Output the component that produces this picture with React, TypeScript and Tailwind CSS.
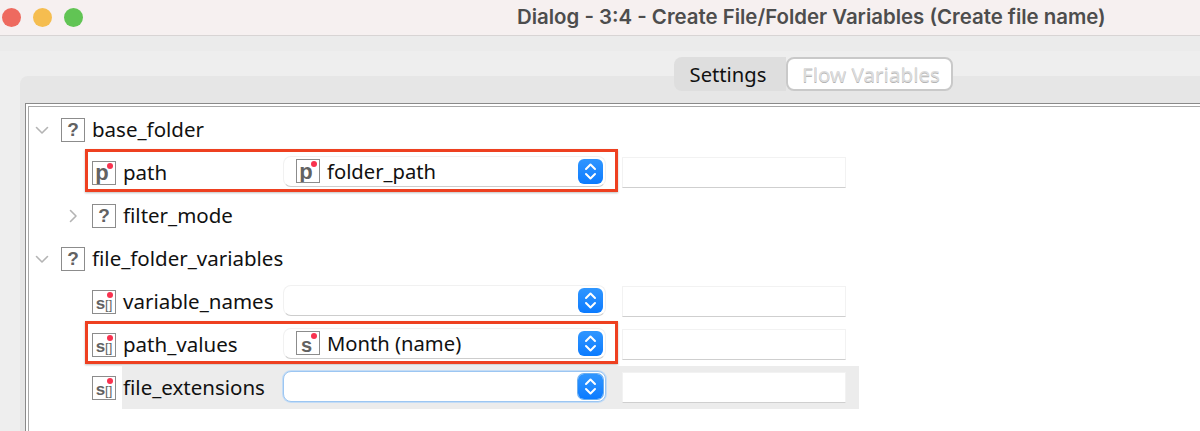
const labelFont = "font-['Noto_Sans','Open_Sans',sans-serif]"

function Chevron({ open }: { open: boolean }) {
  return (
    <svg width="14" height="14" viewBox="0 0 14 14" fill="none" stroke="#b4b4b4" strokeWidth="1.6" strokeLinecap="round" strokeLinejoin="round">
      {open ? <polyline points="1.5,4.5 7,10 12.5,4.5" /> : <polyline points="4.5,1.5 10,7 4.5,12.5" />}
    </svg>
  )
}

function Stepper({ focused }: { focused?: boolean }) {
  return (
    <span className={`flex h-[25px] w-[25px] items-center justify-center rounded-[6px] bg-gradient-to-b from-[#2f96ff] to-[#0a7bff] ${focused ? "shadow-[0_0_0_1px_#6aaef0]" : ""}`}>
      <svg width="15" height="19" viewBox="0 0 15 19" fill="none" stroke="white" strokeWidth="2" strokeLinecap="round" strokeLinejoin="round">
        <polyline points="3,7 7.5,2.5 12,7" />
        <polyline points="3,12 7.5,16.5 12,12" />
      </svg>
    </span>
  )
}

function TypeIcon({ kind }: { kind: "?" | "p" | "s" | "s[]" }) {
  return (
    <span className="relative flex h-[24px] w-[24px] shrink-0 items-center justify-center overflow-hidden border-[1.5px] border-[#8c8c8c] bg-white font-['Liberation_Sans',sans-serif] font-bold text-[#626262]">
      {kind === "?" && <span className="text-[19px] leading-none">?</span>}
      {kind === "p" && <span className="mr-[4px] mt-[1px] text-[22px] leading-none">p</span>}
      {kind === "s" && <span className="mr-[3px] mt-[3px] text-[20px] leading-none">s</span>}
      {kind === "s[]" && (
        <span className="mt-[3px] flex items-baseline text-[17px] leading-none">
          s<span className="text-[13px] font-normal">[]</span>
        </span>
      )}
      {kind !== "?" && <span className="absolute right-[2px] top-[1px] h-[6px] w-[6px] rounded-full bg-[#f8324f]" />}
    </span>
  )
}

function Select({ icon, value, focused }: { icon?: "p" | "s"; value?: string; focused?: boolean }) {
  return (
    <div className={`mb-[3px] flex h-[31px] w-[323px] shrink-0 items-center justify-between rounded-[8px] bg-white pl-[12px] pr-[2px] ${focused ? "border border-[#9cc6f2] shadow-[0_0_0_1px_#c4dcf5]" : "border border-[#f1f1f1] border-b-[#cdcdcd]"}`}>
      <span className="flex items-center gap-[7px]">
        {icon && <TypeIcon kind={icon} />}
        {value && <span className="text-[20.2px] leading-none text-[#111111]">{value}</span>}
      </span>
      <Stepper focused={focused} />
    </div>
  )
}

function TextBox() {
  return <div className="mb-[1px] h-[31px] w-[224px] shrink-0 border border-[#f2f2f2] border-b-[#cfcfcf] bg-white" />
}

function GroupRow({ label, chevron = "open", inset }: { label: string; chevron?: "open" | "closed"; inset?: boolean }) {
  return (
    <div className={`flex h-[43px] items-center ${inset ? "pl-[37px]" : "pl-[6px]"}`}>
      <span className="flex w-[26px] justify-start">
        <Chevron open={chevron === "open"} />
      </span>
      <TypeIcon kind="?" />
      <span className="ml-[7px] text-[20.5px] leading-none text-[#111111]">{label}</span>
    </div>
  )
}

function ParamRow({
  kind,
  label,
  icon,
  value,
  focused,
  highlighted,
  marked,
}: {
  kind: "p" | "s[]"
  label: string
  icon?: "p" | "s"
  value?: string
  focused?: boolean
  highlighted?: boolean
  marked?: boolean
}) {
  return (
    <div className="relative flex h-[43px] items-center pl-[63px]">
      <TypeIcon kind={kind} />
      <div className={`ml-[6px] flex h-full w-[737px] items-center pr-[14px] ${highlighted ? "bg-[#ececec]" : ""}`}>
        <span className="w-[161px] shrink-0 pl-px text-[20.5px] leading-none text-[#111111]">{label}</span>
        <Select icon={icon} value={value} focused={focused} />
        <div className="w-[16px] shrink-0" />
        <TextBox />
      </div>
      {marked && (
        <div className="absolute left-[56px] top-[-2px] h-[43px] w-[533px] border-[3px] border-[#ee4020] shadow-[0_1px_2px_rgba(0,0,0,0.25)]" />
      )}
    </div>
  )
}

export default function App() {
  return (
    <div className={`flex h-[431px] w-[1200px] flex-col overflow-hidden ${labelFont}`}>
      {/* title bar */}
      <div className="flex h-[36px] shrink-0 items-center border-b border-[#d8d4d4] bg-[#f6f0f0]">
        <div className="ml-[2px] flex gap-[12px]">
          <span className="h-[19px] w-[19px] rounded-full bg-[#ee6a5f]" />
          <span className="h-[19px] w-[19px] rounded-full bg-[#f5bd4f]" />
          <span className="h-[19px] w-[19px] rounded-full bg-[#61c454]" />
        </div>
        <span className="ml-[434px] whitespace-nowrap font-['Inter',sans-serif] text-[20.4px] font-semibold text-[#4d4d4d]">
          Dialog - 3:4 - Create File/Folder Variables (Create file name)
        </span>
      </div>

      <div className="flex-1 bg-[#ebebeb] pt-[15px]">
        <div className="h-full bg-[#eeeeee] pl-[20px] pt-[25px]">
          <div className="h-full rounded-tl-[8px] bg-[#e6e6e6] pl-[5px] pt-[27px]">
            {/* tabs */}
            <div className="-mt-[46px] mb-[12px] ml-[649px] flex h-[34px] w-[279px] items-stretch">
              <div className="flex w-[112px] items-center justify-center rounded-l-[8px] bg-[#dedede] pr-[4px] text-[20.2px] text-[#111111]">
                Settings
              </div>
              <div className="flex w-[167px] items-center justify-center rounded-[8px] border-2 border-[#c9c9c9] bg-white pl-[3px] text-[20.6px] text-[#dcdcdc] [text-shadow:0_1px_0_#b5b5b5]">
                Flow Variables
              </div>
            </div>

            {/* settings tree */}
            <div className="h-[400px] w-[1180px] border border-[#8a8a8a] bg-white pl-[2px] pt-[2px]">
              <div className="h-full border border-[#a8a8a8] bg-white pt-px">
                <GroupRow label="base_folder" />
                <ParamRow kind="p" label="path" icon="p" value="folder_path" marked />
                <GroupRow label="filter_mode" chevron="closed" inset />
                <GroupRow label="file_folder_variables" />
                <ParamRow kind="s[]" label="variable_names" />
                <ParamRow kind="s[]" label="path_values" icon="s" value="Month (name)" marked />
                <ParamRow kind="s[]" label="file_extensions" focused highlighted />
              </div>
            </div>
          </div>
        </div>
      </div>
    </div>
  )
}
